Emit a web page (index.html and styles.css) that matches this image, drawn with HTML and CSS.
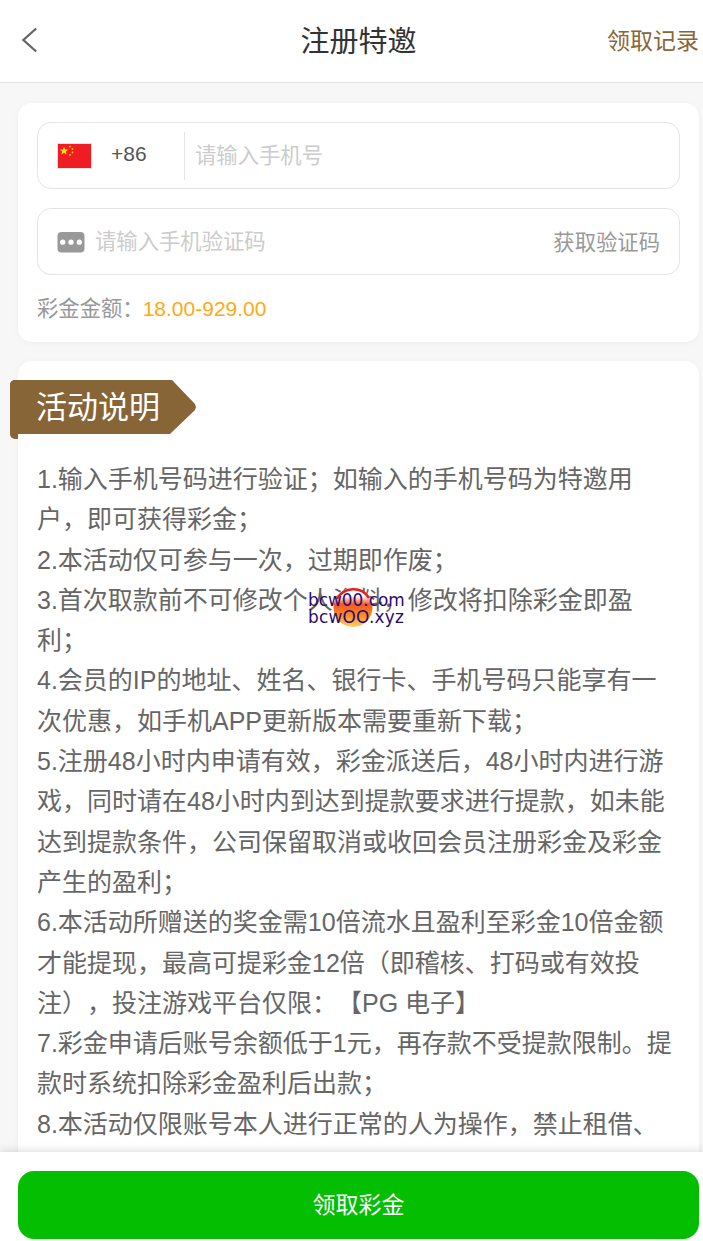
FILE: index.html
```html
<!DOCTYPE html>
<html lang="zh-CN">
<head>
  <meta charset="UTF-8">
  <meta name="viewport" content="width=device-width, initial-scale=1.0">
  <title>注册特邀</title>
  <link rel="stylesheet" href="styles.css">
</head>
<body>
  <div class="app">
    <header class="topbar">
      <svg class="back" width="18" height="28" viewBox="0 0 18 28"><path d="M16.2 2.5 L3.4 14 L16.2 25.5" fill="none" stroke="#666" stroke-width="2.3"/></svg>
      <h1>注册特邀</h1>
      <a class="records">领取记录</a>
    </header>

    <main class="content">
      <section class="card form-card">
        <div class="field">
          <svg class="flag" width="35" height="26" viewBox="0 0 35 26">
            <rect x="0.5" y="0.5" width="34" height="25" fill="#f01c24" stroke="#e3e3e3"/>
            <polygon points="7,3.4 8.1,6.4 11.2,6.5 8.8,8.4 9.6,11.4 7,9.7 4.4,11.4 5.2,8.4 2.8,6.5 5.9,6.4" fill="#ffe000"/>
            <circle cx="13" cy="3.5" r="0.9" fill="#ffc800"/>
            <circle cx="15.5" cy="6" r="0.9" fill="#ffc800"/>
            <circle cx="15.5" cy="9.5" r="0.9" fill="#ffc800"/>
            <circle cx="13" cy="12" r="0.9" fill="#ffc800"/>
          </svg>
          <span class="code">+86</span>
          <span class="divider"></span>
          <span class="placeholder">请输入手机号</span>
        </div>
        <div class="field">
          <svg class="sms" width="28" height="22" viewBox="0 0 28 22">
            <rect x="0.5" y="1" width="27" height="20.5" rx="4" fill="#999"/>
            <circle cx="5.7" cy="11.2" r="2.6" fill="#fff"/>
            <circle cx="14" cy="11.2" r="2.6" fill="#fff"/>
            <circle cx="22.3" cy="11.2" r="2.6" fill="#fff"/>
          </svg>
          <span class="placeholder grow">请输入手机验证码</span>
          <span class="get-code">获取验证码</span>
        </div>
        <p class="amount">彩金金额：<span>18.00-929.00</span></p>
      </section>

      <section class="card rules-card">
        <div class="ribbon"><span class="ribbon-label">活动说明</span></div>
        <div class="rules">
          <p>1.输入手机号码进行验证；如输入的手机号码为特邀用户，即可获得彩金；</p>
          <p>2.本活动仅可参与一次，过期即作废；</p>
          <p>3.首次取款前不可修改个人资料，修改将扣除彩金即盈利；</p>
          <p>4.会员的IP的地址、姓名、银行卡、手机号码只能享有一次优惠，如手机APP更新版本需要重新下载；</p>
          <p>5.注册48小时内申请有效，彩金派送后，48小时内进行游戏，同时请在48小时内到达到提款要求进行提款，如未能达到提款条件，公司保留取消或收回会员注册彩金及彩金产生的盈利；</p>
          <p>6.本活动所赠送的奖金需10倍流水且盈利至彩金10倍金额才能提现，最高可提彩金12倍（即稽核、打码或有效投注），投注游戏平台仅限：【PG 电子】</p>
          <p>7.彩金申请后账号余额低于1元，再存款不受提款限制。提款时系统扣除彩金盈利后出款；</p>
          <p>8.本活动仅限账号本人进行正常的人为操作，禁止租借、</p>
        </div>
      </section>
    </main>

    <footer class="bottombar">
      <button class="claim-btn">领取彩金</button>
    </footer>

    <div class="watermark">
      <svg class="wm-logo" width="40" height="41" viewBox="0 0 40 41">
        <defs>
          <linearGradient id="wm-fill" x1="0" y1="0" x2="0" y2="1">
            <stop offset="0.2" stop-color="#ffffff"/>
            <stop offset="0.42" stop-color="#f4581f"/>
            <stop offset="0.7" stop-color="#fb8a2b"/>
            <stop offset="1" stop-color="#fdd064"/>
          </linearGradient>
        </defs>
        <circle cx="20" cy="20.5" r="19.5" fill="url(#wm-fill)"/>
        <path d="M4 12 A18.5 18.5 0 0 1 36 11" fill="none" stroke="#ec1c1c" stroke-width="2.6"/>
      </svg>
      <span class="wm-line">bcw00.com</span>
      <span class="wm-line wm-wide">bcwOO.xyz</span>
    </div>
  </div>
</body>
</html>
```

FILE: styles.css
```css
* {
  box-sizing: border-box;
}
html, body {
  margin: 0;
  height: 100%;
  overflow: hidden;
}
body {
  font-family: "Liberation Sans", "Noto Sans CJK SC", sans-serif;
  text-spacing-trim: space-all;
  background: #f7f7f7;
  color: #666;
}
.app {
  position: relative;
  height: 1241px;
  display: flex;
  flex-direction: column;
}

/* top bar */
.topbar {
  height: 83px;
  flex-shrink: 0;
  background: #fff;
  border-bottom: 1px solid #e2e2e2;
  display: flex;
  align-items: center;
  justify-content: center;
  position: relative;
}
.topbar h1 {
  margin: 0 0 4px 14px;
  font-size: 29px;
  font-weight: 400;
  color: #333;
}
.back {
  position: absolute;
  left: 20px;
  top: 26px;
}
.records {
  position: absolute;
  right: 4px;
  top: 22px;
  font-size: 23px;
  color: #8a6637;
}

/* content */
.content {
  flex: 1;
  overflow: hidden;
  padding: 20px 4px 0 18px;
}
.card {
  background: #fff;
  border-radius: 14px;
  box-shadow: 0 1px 6px rgba(0, 0, 0, 0.04);
}
.form-card {
  padding: 19px 19px 0;
  height: 239px;
  margin-bottom: 19px;
}
.field {
  height: 67px;
  margin-bottom: 19px;
  border: 1px solid #e4e4e4;
  border-radius: 14px;
  padding: 0 19px;
  display: flex;
  align-items: center;
  font-size: 21.33px;
}
.flag {
  flex-shrink: 0;
}
.code {
  margin: 0 0 4px 19px;
  width: 73px;
  font-size: 21px;
  color: #555;
}
.divider {
  width: 1px;
  height: 48px;
  background: #e4e4e4;
  margin-right: 10px;
}
.placeholder {
  color: #ccc;
  margin-bottom: 5px;
}
.grow {
  flex: 1;
}
.sms {
  margin-right: 10px;
  flex-shrink: 0;
}
.get-code {
  color: #999;
  margin-bottom: 2px;
}
.amount {
  margin: 0;
  font-size: 21.33px;
  line-height: 30px;
  color: #999;
}
.amount span {
  margin-left: -1px;
  font-size: 21px;
  color: #ffa914;
}

/* rules */
.rules-card {
  padding-top: 19px;
  min-height: 900px;
}
.ribbon {
  position: relative;
  margin-left: -8px;
  width: 186px;
  height: 54px;
}
/* the fold under the left edge of the ribbon */
.ribbon::before {
  content: "";
  position: absolute;
  left: 0;
  top: 0;
  width: 8px;
  height: 59px;
  background: #876537;
  border-radius: 5px 0 0 5px;
}
.ribbon-label {
  position: relative;
  display: flex;
  align-items: center;
  height: 54px;
  padding: 0 0 6px 26px;
  background: #876537;
  border-top-left-radius: 5px;
  clip-path: polygon(0 0, 162px 0, 185px 24px, 186px 27px, 185px 30px, 160px 54px, 0 54px);
  font-size: 31px;
  color: #fff;
}
.rules {
  padding: 25px 21px 0 19px;
  font-size: 25px;
  line-height: 40.3px;
  color: #666;
}
.rules p {
  margin: 0;
}

/* bottom */
.bottombar {
  height: 89px;
  flex-shrink: 0;
  background: #fff;
  padding: 19px 4px 2px 18px;
  box-shadow: 0 -2px 8px rgba(0, 0, 0, 0.12);
  position: relative;
}
.claim-btn {
  width: 100%;
  height: 68px;
  padding: 0 0 4px;
  border: none;
  border-radius: 16px;
  background: #04be02;
  color: #fff;
  font-family: inherit;
  font-size: 23px;
}

/* floating watermark */
.watermark {
  position: absolute;
  left: 308px;
  top: 587px;
  width: 98px;
  height: 42px;
}
.wm-logo {
  position: absolute;
  left: 25px;
  top: 0;
}
.wm-line {
  position: relative;
  display: block;
  font-family: "DejaVu Sans", sans-serif;
  font-size: 16.9px;
  line-height: 17px;
  color: #2a0a6e;
  top: 5px;
}
.wm-wide {
  letter-spacing: 0.25px;
}
```
